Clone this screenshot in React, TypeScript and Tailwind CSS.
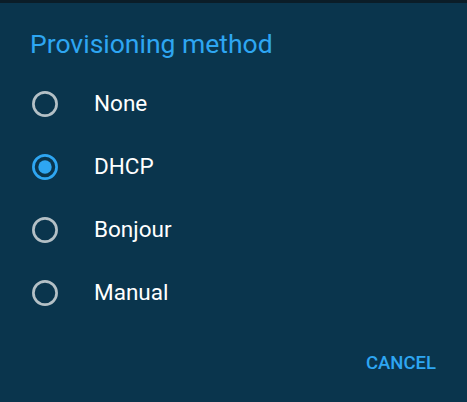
import React from "react";

const options = ["None", "DHCP", "Bonjour", "Manual"];
const selected = "DHCP";

function Radio({ checked }: { checked: boolean }) {
  return (
    <svg width="28" height="28" viewBox="0 0 28 28">
      <circle
        cx="14"
        cy="14"
        r="11.6"
        fill="none"
        stroke={checked ? "#2ea6f2" : "#b4c0c6"}
        strokeWidth="2.7"
      />
      {checked && <circle cx="14" cy="14" r="6.7" fill="#2ea6f2" />}
    </svg>
  );
}

export default function App() {
  return (
    <div
      className="w-[467px] h-[402px] bg-[#0a354d] flex flex-col overflow-hidden"
      style={{ fontFamily: "Roboto, 'Liberation Sans', sans-serif" }}
    >
      <div className="h-[3px] bg-[#0b1d28] shrink-0" />
      <div className="pl-[30px] pt-[24px] text-[26.5px] leading-[34px] font-normal text-[#2ea6f2]">
        Provisioning method
      </div>
      <div className="flex flex-col pt-[11px]">
        {options.map((o) => (
          <div key={o} className="flex items-center h-[63px] pl-[31px]">
            <Radio checked={o === selected} />
            <span className="ml-[35px] text-[22.5px] text-white">{o}</span>
          </div>
        ))}
      </div>
      <div className="flex justify-end pr-[31px] pt-[26px]">
        <span className="text-[18.5px] font-medium text-[#2ea6f2]">
          CANCEL
        </span>
      </div>
    </div>
  );
}
